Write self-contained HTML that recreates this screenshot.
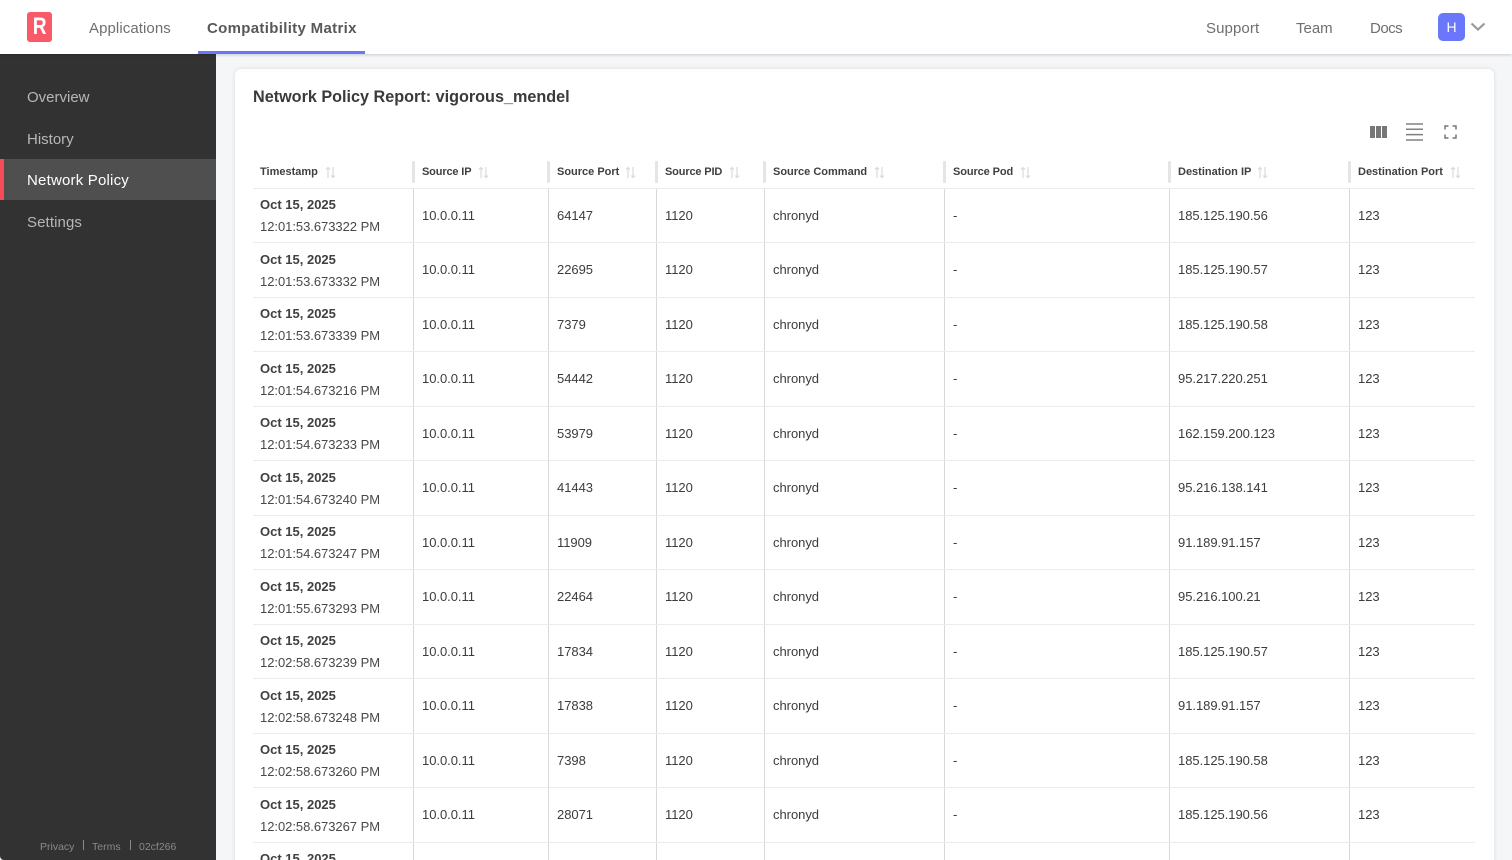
<!DOCTYPE html>
<html><head><meta charset="utf-8"><title>Network Policy</title>
<style>
*{box-sizing:border-box}
html,body{margin:0;padding:0;width:1512px;height:860px;overflow:hidden;background:#f5f6f8;font-family:"Liberation Sans",sans-serif;color:#323232}
.wrap{position:relative;width:1512px;height:860px;overflow:hidden;background:#f5f6f8}
.hdr{position:absolute;left:0;top:0;width:1512px;height:54px;background:#fff;box-shadow:0 1px 3px rgba(0,0,0,.18);z-index:3}
.hdr span{position:absolute;top:18.600px;font-size:15px;line-height:19px;color:#6f6f6f}
.logo{position:absolute;left:27px;top:12px;width:25px;height:30px;background:#f85a68;border-radius:3px;color:#fff;font-weight:bold;font-size:24px;line-height:30px;text-align:center}
.logo b{display:inline-block;transform:scaleX(.8)}
.tab{position:absolute;left:198px;top:51px;width:167px;height:3px;background:#6a77fb}
.av{position:absolute;left:1438px;top:13px;width:27px;height:28px;background:#6a77fb;border-radius:5px;color:#fff;font-size:14px;line-height:28px;text-align:center}
.side{position:absolute;left:0;top:54px;width:216px;height:806px;background:#323232;border-bottom-left-radius:4px}
.side a{position:absolute;left:27px;font-size:15px;line-height:20px;color:#b5b8b8}
.act{position:absolute;left:0;top:105px;width:216px;height:41px;background:#4f4f4f;border-left:4px solid #f74b5a}
.ft{position:absolute;top:786px;font-size:10.500px;line-height:14px;color:#8a8a8a}
.ftl{position:absolute;top:786px;width:1px;height:10px;background:#8a8a8a}
.card{position:absolute;left:235px;top:69px;width:1259px;height:820px;background:#fff;border-radius:6px;box-shadow:0 0 4px rgba(0,0,0,.12)}
h1{position:absolute;left:18px;top:18px;margin:0;font-size:16.200px;line-height:21px;font-weight:bold;color:#3a3a3a}
.tbl{position:absolute;left:253px;top:155px;width:1222px;z-index:1}
.r{display:flex;height:54.500px;border-bottom:1px solid #ececec}
.r.h{height:33.600px;border-bottom:1px solid #ececec}
.c{position:relative;flex:none;padding-left:8px;font-size:13px;letter-spacing:-.04px;display:flex;flex-direction:column;justify-content:center;border-right:1px solid #d8d8d8;color:#3c3c3c}
.c:last-child{border-right:0}
.c:first-child{padding-left:7px}
.w1{width:161px}.w2{width:135px}.w3{width:108px}.w4{width:108px}.w5{width:180px}.w6{width:225px}.w7{width:180px}.w8{width:125px}
.h .c{border-right:0;font-size:11px;letter-spacing:0;font-weight:bold;flex-direction:row;justify-content:flex-start;align-items:center;color:#404040;padding-top:2px}
.h .c:not(:last-child)::after{content:"";position:absolute;right:-1px;top:6px;width:3px;height:21.500px;background:#e5e5e5;border-radius:1px}
.h svg{position:absolute;top:11px}
.d{font-weight:bold;line-height:22px;position:relative;top:.95px;color:#404040;letter-spacing:0}
.t{line-height:22px;position:relative;top:.7px;color:#484848}
</style></head><body>
<div class="wrap">
<div class="hdr">
<div class="logo"><b>R</b></div>
<span style="left:89px;letter-spacing:.08px">Applications</span>
<span style="left:207px;font-weight:bold;color:#585858;letter-spacing:.32px">Compatibility Matrix</span>
<div class="tab"></div>
<span style="left:1206px;letter-spacing:.1px">Support</span>
<span style="left:1296px">Team</span>
<span style="left:1370px;letter-spacing:-.5px">Docs</span>
<div class="av">H</div>
<svg style="position:absolute;left:1470px;top:22px" width="16" height="10" viewBox="0 0 16 10"><path d="M1.500 1.500 L8 7.500 L14.500 1.500" fill="none" stroke="#9a9a9a" stroke-width="2.200"/></svg>
</div>
<div class="side">
<a style="top:33.500px">Overview</a>
<a style="top:75.500px">History</a>
<div class="act"></div>
<a style="top:116.500px;color:#fff;letter-spacing:.2px">Network Policy</a>
<a style="top:158.500px;letter-spacing:.1px">Settings</a>
<span class="ft" style="left:40px">Privacy</span><i class="ftl" style="left:83px"></i>
<span class="ft" style="left:92px">Terms</span><i class="ftl" style="left:130px"></i>
<span class="ft" style="left:139px">02cf266</span>
</div>
<div class="card"><h1>Network Policy Report: vigorous_mendel</h1></div>
<svg style="position:absolute;left:1370px;top:126px;z-index:2" width="17" height="12" viewBox="0 0 17 12"><path d="M0 0h5v12H0zM6 0h5v12H6zM12 0h5v12h-5z" fill="#777"/></svg>
<svg style="position:absolute;left:1406px;top:123px;z-index:2" width="17" height="18" viewBox="0 0 17 18"><path d="M0 1h17M0 6.300h17M0 11.600h17M0 17h17" stroke="#808080" stroke-width="1.500"/></svg>
<svg style="position:absolute;left:1444px;top:125px;z-index:2" width="13" height="14" viewBox="0 0 13 14"><path d="M1 4.500V1h3.500M8.500 1H12v3.500M12 9.500V13H8.500M4.500 13H1V9.500" fill="none" stroke="#777" stroke-width="1.500"/></svg>
<div class="tbl">
<svg width="0" height="0" style="position:absolute"><defs><g id="s"><path d="M3 12V1.500M1 3.500 3 1.500 5 3.500M8 1v10.500M6 9.500 8 11.500 10 9.500" fill="none" stroke="#dadada" stroke-width="1.200"/></g></defs></svg>
<div class="r h">
<div class="c w1">Timestamp<svg width="11" height="13" style="left:72px"><use href="#s"/></svg></div>
<div class="c w2" style="letter-spacing:-.15px">Source IP<svg width="11" height="13" style="left:63.500px"><use href="#s"/></svg></div>
<div class="c w3">Source Port<svg width="11" height="13" style="left:76px"><use href="#s"/></svg></div>
<div class="c w4" style="letter-spacing:-.15px">Source PID<svg width="11" height="13" style="left:71.500px"><use href="#s"/></svg></div>
<div class="c w5">Source Command<svg width="11" height="13" style="left:108.500px"><use href="#s"/></svg></div>
<div class="c w6" style="letter-spacing:-.1px">Source Pod<svg width="11" height="13" style="left:74.500px"><use href="#s"/></svg></div>
<div class="c w7">Destination IP<svg width="11" height="13" style="left:86.500px"><use href="#s"/></svg></div>
<div class="c w8">Destination Port<svg width="11" height="13" style="left:99.500px"><use href="#s"/></svg></div>
</div>
<div class="r"><div class="c w1"><div class="d">Oct 15, 2025</div><div class="t">12:01:53.673322 PM</div></div><div class="c w2">10.0.0.11</div><div class="c w3">64147</div><div class="c w4">1120</div><div class="c w5">chronyd</div><div class="c w6">-</div><div class="c w7">185.125.190.56</div><div class="c w8">123</div></div>
<div class="r"><div class="c w1"><div class="d">Oct 15, 2025</div><div class="t">12:01:53.673332 PM</div></div><div class="c w2">10.0.0.11</div><div class="c w3">22695</div><div class="c w4">1120</div><div class="c w5">chronyd</div><div class="c w6">-</div><div class="c w7">185.125.190.57</div><div class="c w8">123</div></div>
<div class="r"><div class="c w1"><div class="d">Oct 15, 2025</div><div class="t">12:01:53.673339 PM</div></div><div class="c w2">10.0.0.11</div><div class="c w3">7379</div><div class="c w4">1120</div><div class="c w5">chronyd</div><div class="c w6">-</div><div class="c w7">185.125.190.58</div><div class="c w8">123</div></div>
<div class="r"><div class="c w1"><div class="d">Oct 15, 2025</div><div class="t">12:01:54.673216 PM</div></div><div class="c w2">10.0.0.11</div><div class="c w3">54442</div><div class="c w4">1120</div><div class="c w5">chronyd</div><div class="c w6">-</div><div class="c w7">95.217.220.251</div><div class="c w8">123</div></div>
<div class="r"><div class="c w1"><div class="d">Oct 15, 2025</div><div class="t">12:01:54.673233 PM</div></div><div class="c w2">10.0.0.11</div><div class="c w3">53979</div><div class="c w4">1120</div><div class="c w5">chronyd</div><div class="c w6">-</div><div class="c w7">162.159.200.123</div><div class="c w8">123</div></div>
<div class="r"><div class="c w1"><div class="d">Oct 15, 2025</div><div class="t">12:01:54.673240 PM</div></div><div class="c w2">10.0.0.11</div><div class="c w3">41443</div><div class="c w4">1120</div><div class="c w5">chronyd</div><div class="c w6">-</div><div class="c w7">95.216.138.141</div><div class="c w8">123</div></div>
<div class="r"><div class="c w1"><div class="d">Oct 15, 2025</div><div class="t">12:01:54.673247 PM</div></div><div class="c w2">10.0.0.11</div><div class="c w3">11909</div><div class="c w4">1120</div><div class="c w5">chronyd</div><div class="c w6">-</div><div class="c w7">91.189.91.157</div><div class="c w8">123</div></div>
<div class="r"><div class="c w1"><div class="d">Oct 15, 2025</div><div class="t">12:01:55.673293 PM</div></div><div class="c w2">10.0.0.11</div><div class="c w3">22464</div><div class="c w4">1120</div><div class="c w5">chronyd</div><div class="c w6">-</div><div class="c w7">95.216.100.21</div><div class="c w8">123</div></div>
<div class="r"><div class="c w1"><div class="d">Oct 15, 2025</div><div class="t">12:02:58.673239 PM</div></div><div class="c w2">10.0.0.11</div><div class="c w3">17834</div><div class="c w4">1120</div><div class="c w5">chronyd</div><div class="c w6">-</div><div class="c w7">185.125.190.57</div><div class="c w8">123</div></div>
<div class="r"><div class="c w1"><div class="d">Oct 15, 2025</div><div class="t">12:02:58.673248 PM</div></div><div class="c w2">10.0.0.11</div><div class="c w3">17838</div><div class="c w4">1120</div><div class="c w5">chronyd</div><div class="c w6">-</div><div class="c w7">91.189.91.157</div><div class="c w8">123</div></div>
<div class="r"><div class="c w1"><div class="d">Oct 15, 2025</div><div class="t">12:02:58.673260 PM</div></div><div class="c w2">10.0.0.11</div><div class="c w3">7398</div><div class="c w4">1120</div><div class="c w5">chronyd</div><div class="c w6">-</div><div class="c w7">185.125.190.58</div><div class="c w8">123</div></div>
<div class="r"><div class="c w1"><div class="d">Oct 15, 2025</div><div class="t">12:02:58.673267 PM</div></div><div class="c w2">10.0.0.11</div><div class="c w3">28071</div><div class="c w4">1120</div><div class="c w5">chronyd</div><div class="c w6">-</div><div class="c w7">185.125.190.56</div><div class="c w8">123</div></div>
<div class="r"><div class="c w1"><div class="d">Oct 15, 2025</div><div class="t">12:02:58.673270 PM</div></div><div class="c w2"></div><div class="c w3"></div><div class="c w4"></div><div class="c w5"></div><div class="c w6"></div><div class="c w7"></div><div class="c w8"></div></div>
</div>
</div>
</body></html>
